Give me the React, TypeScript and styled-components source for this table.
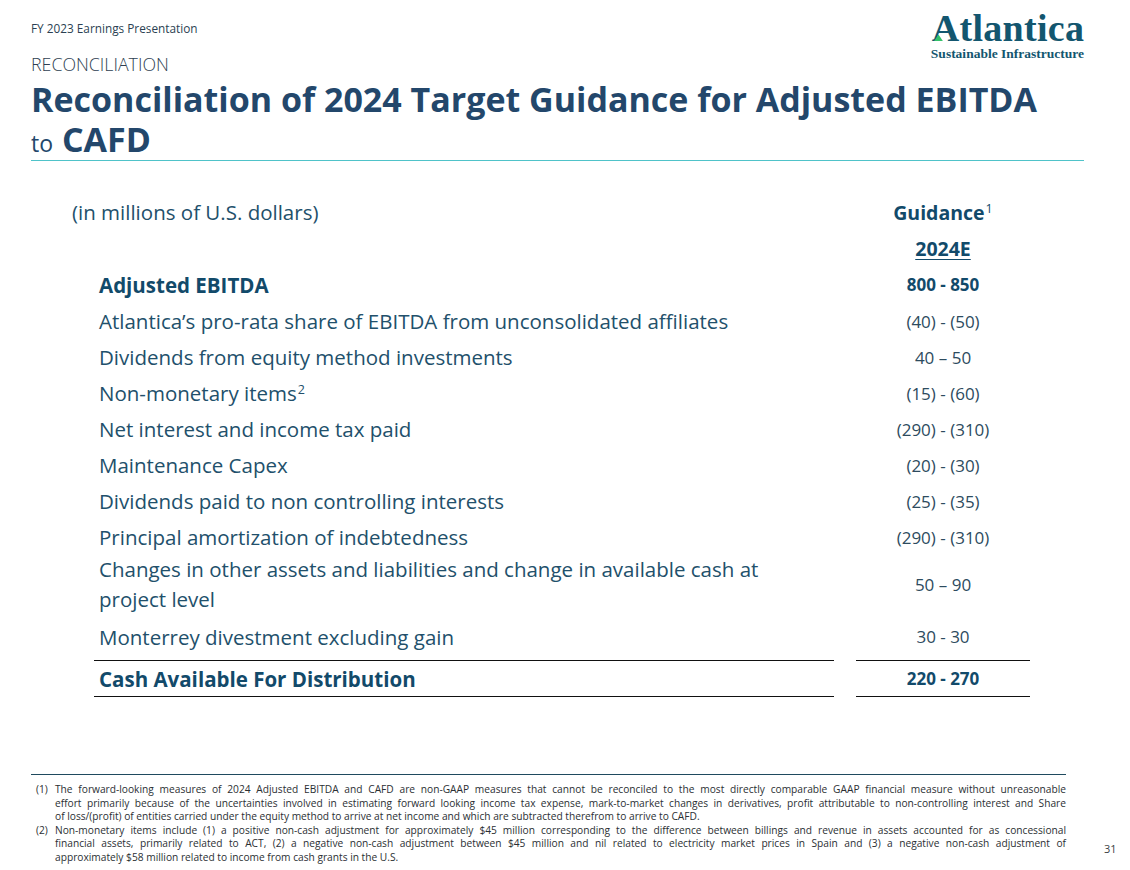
import React from 'react';
import styled, { createGlobalStyle } from 'styled-components';

type Row = { label: string; note?: string; value: string; bold?: boolean; h: number };

const rows: Row[] = [
  { label: 'Adjusted EBITDA', value: '800 - 850', bold: true, h: 37 },
  { label: 'Atlantica’s pro-rata share of EBITDA from unconsolidated affiliates', value: '(40) - (50)', h: 36 },
  { label: 'Dividends from equity method investments', value: '40 – 50', h: 36 },
  { label: 'Non-monetary items', note: '2', value: '(15) - (60)', h: 36 },
  { label: 'Net interest and income tax paid', value: '(290) - (310)', h: 36 },
  { label: 'Maintenance Capex', value: '(20) - (30)', h: 36 },
  { label: 'Dividends paid to non controlling interests', value: '(25) - (35)', h: 36 },
  { label: 'Principal amortization of indebtedness', value: '(290) - (310)', h: 36 },
  {
    label: 'Changes in other assets and liabilities and change in available cash at project level',
    value: '50 – 90',
    h: 58,
  },
  { label: 'Monterrey divestment excluding gain', value: '30 - 30', h: 47 },
];

const notes = [
  {
    n: '(1)',
    lines: [
      'The forward-looking measures of 2024 Adjusted EBITDA and CAFD are non-GAAP measures that cannot be reconciled to the most directly comparable GAAP financial measure without unreasonable',
      'effort primarily because of the uncertainties involved in estimating forward looking income tax expense, mark-to-market changes in derivatives, profit attributable to non-controlling interest and Share',
      'of loss/(profit) of entities carried under the equity method to arrive at net income and which are subtracted therefrom to arrive to CAFD.',
    ],
  },
  {
    n: '(2)',
    lines: [
      'Non-monetary items include (1) a positive non-cash adjustment for approximately $45 million corresponding to the difference between billings and revenue in assets accounted for as concessional',
      'financial assets, primarily related to ACT, (2) a negative non-cash adjustment between $45 million and nil related to electricity market prices in Spain and (3) a negative non-cash adjustment of',
      'approximately $58 million related to income from cash grants in the U.S.',
    ],
  },
];

export default function App() {
  return (
    <>
      <GlobalStyle />
      <Slide>
        <Header>
          <Kicker>FY 2023 Earnings Presentation</Kicker>
          <Logo />
        </Header>
        <Section>RECONCILIATION</Section>
        <Title>
          <TitleLine>Reconciliation of 2024 Target Guidance for Adjusted EBITDA</TitleLine>
          <TitleLine>
            <Small>to</Small> CAFD
          </TitleLine>
        </Title>
        <Rule />

        <Table>
          <Label $outdent h={36}>(in millions of U.S. dollars)</Label>
          <Value $bold $big h={36}>
            <span>
              Guidance<Sup>1</Sup>
            </span>
          </Value>
          <Label h={36} />
          <Value $bold $big $underline h={36}>2024E</Value>
          {rows.map((r, i) => (
            <React.Fragment key={i}>
              <Label $bold={r.bold} h={r.h}>
                <span>
                  {r.label}
                  {r.note && <Sup>{r.note}</Sup>}
                </span>
              </Label>
              <Value $bold={r.bold} h={r.h}>{r.value}</Value>
            </React.Fragment>
          ))}
          <Label $bold $total h={37}>Cash Available For Distribution</Label>
          <Value $bold $total h={37}>220 - 270</Value>
        </Table>

        <Footer>
          <Notes>
            {notes.map((note) => (
              <Note key={note.n}>
                <NoteNum>{note.n}</NoteNum>
                <NoteBody>
                  {note.lines.map((l, i) => (
                    <NoteLine key={i} $last={i === note.lines.length - 1}>{l}</NoteLine>
                  ))}
                </NoteBody>
              </Note>
            ))}
          </Notes>
          <PageNum>31</PageNum>
        </Footer>
      </Slide>
    </>
  );
}

function Logo() {
  return (
    <LogoWrap>
      <LogoName>
        Atlantica
        <LogoMark viewBox="0 0 10 8">
          <polygon points="0,8 5,0.5 10,8" fill="#35c26b" />
        </LogoMark>
      </LogoName>
      <LogoTag>Sustainable Infrastructure</LogoTag>
    </LogoWrap>
  );
}

const GlobalStyle = createGlobalStyle`
  body {
    margin: 0;
    background: #fff;
    font-family: "Open Sans", "Noto Sans", sans-serif;
  }
`;

const Slide = styled.div`
  width: 1130px;
  height: 870px;
  box-sizing: border-box;
  padding: 20px 46px 0 31px;
  display: flex;
  flex-direction: column;
`;

const Header = styled.div`
  height: 24px;
  display: flex;
  justify-content: space-between;
  align-items: flex-start;
`;

const Kicker = styled.div`
  font-size: 11.8px;
  line-height: 16px;
  color: #2b3f52;
`;

const Section = styled.div`
  margin-top: 10px;
  font-size: 17.8px;
  line-height: 20px;
  font-weight: 300;
  color: #2f3f52;
`;

const Title = styled.h1`
  margin: 5px 0 1px;
  font-size: 34px;
  font-weight: 700;
  color: #23476b;
  white-space: nowrap;
`;

const TitleLine = styled.div`
  height: 40px;
  line-height: 40px;
`;

const Small = styled.span`
  font-size: 23px;
  font-weight: 400;
`;

const Rule = styled.div`
  height: 1px;
  background: #4fc3c9;
`;

const LogoWrap = styled.div`
  margin-top: -10px;
  display: flex;
  flex-direction: column;
  align-items: flex-end;
  color: #13566f;
`;

const LogoName = styled.div`
  position: relative;
  font-family: "Liberation Serif", "DejaVu Serif", serif;
  font-size: 38px;
  line-height: 36px;
  font-weight: 700;
  letter-spacing: 0.3px;
  margin-right: -0.3px;
`;

const LogoMark = styled.svg`
  position: absolute;
  left: 2px;
  bottom: 5px;
  width: 9px;
  height: 7px;
`;

const LogoTag = styled.div`
  font-family: "Liberation Serif", serif;
  font-size: 13.5px;
  line-height: 14px;
  margin-top: 1px;
  font-weight: 700;
`;

const Table = styled.div`
  margin: 33px 0 0 63px;
  width: 936px;
  display: grid;
  grid-template-columns: 740px 174px;
  column-gap: 22px;
`;

type CellProps = {
  $bold?: boolean;
  $big?: boolean;
  $total?: boolean;
  $outdent?: boolean;
  $underline?: boolean;
  h: number;
};

const Label = styled.div<CellProps>`
  height: ${(p) => p.h}px;
  box-sizing: border-box;
  display: flex;
  align-items: center;
  padding: 0 60px 0 5px;
  margin-left: ${(p) => (p.$outdent ? '-27px' : '0')};
  font-size: 20.5px;
  line-height: 30px;
  font-weight: ${(p) => (p.$bold ? 700 : 400)};
  color: ${(p) => (p.$bold ? '#124a6a' : '#22506b')};
  border-top: ${(p) => (p.$total ? '1px solid #111' : 'none')};
  border-bottom: ${(p) => (p.$total ? '1px solid #111' : 'none')};
`;

const Value = styled.div<CellProps>`
  height: ${(p) => p.h}px;
  box-sizing: border-box;
  display: flex;
  align-items: center;
  justify-content: center;
  font-size: ${(p) => (p.$big ? '19.5px' : '17px')};
  font-weight: ${(p) => (p.$bold ? 700 : 400)};
  color: ${(p) => (p.$bold ? '#124a6a' : '#2d4b5e')};
  text-decoration: ${(p) => (p.$underline ? 'underline' : 'none')};
  text-underline-offset: 3px;
  border-top: ${(p) => (p.$total ? '1px solid #111' : 'none')};
  border-bottom: ${(p) => (p.$total ? '1px solid #111' : 'none')};
`;

const Sup = styled.span`
  font-size: 12.5px;
  line-height: 1;
  font-weight: 400;
  position: relative;
  top: -7px;
  margin-left: 1px;
`;

const Footer = styled.div`
  margin-top: auto;
  height: 96px;
  display: flex;
  align-items: flex-start;
`;

const Notes = styled.div`
  width: 1043px;
  border-top: 1px solid #1f4a5e;
  padding-top: 8px;
  box-sizing: border-box;
`;

const Note = styled.div`
  display: flex;
  padding-left: 5px;
`;

const NoteNum = styled.div`
  width: 19px;
  flex: none;
  font-size: 10.2px;
  line-height: 13.6px;
  color: #2b2f33;
`;

const NoteBody = styled.div`
  width: 1011px;
`;

const NoteLine = styled.div<{ $last?: boolean }>`
  font-size: 10.2px;
  line-height: 13.6px;
  color: #2b2f33;
  text-align: justify;
  text-align-last: ${(p) => (p.$last ? 'left' : 'justify')};
  white-space: nowrap;
`;

const PageNum = styled.div`
  margin: 67px 0 0 38px;
  font-size: 11px;
  color: #3a3f44;
`;
